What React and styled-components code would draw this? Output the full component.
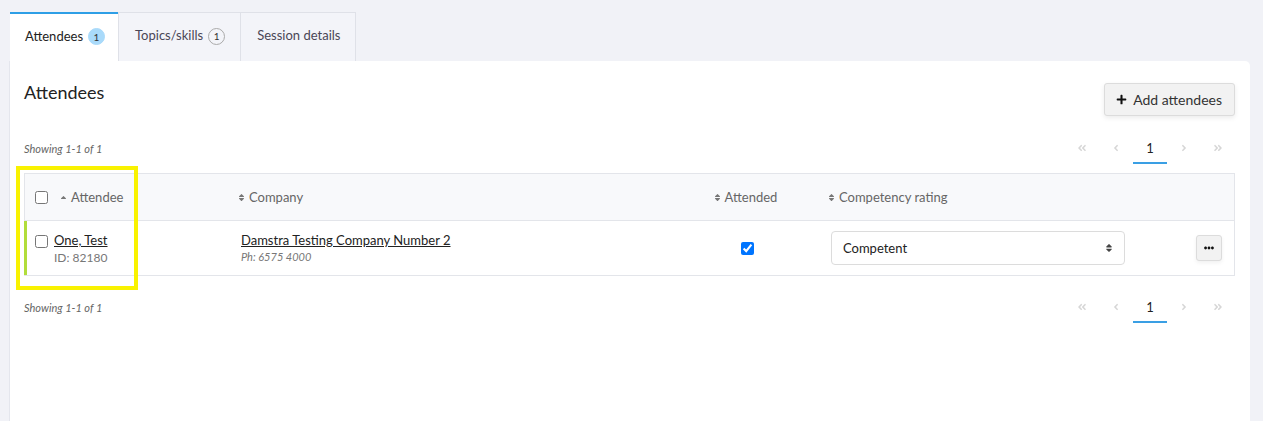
import styled, { createGlobalStyle, css } from "styled-components"
import {
    FaAngleDoubleLeft, FaAngleDoubleRight, FaAngleLeft, FaAngleRight,
    FaPlus, FaEllipsisH, FaSort, FaSortUp
} from "react-icons/fa"

const GlobalStyle = createGlobalStyle`
    body{
        margin: 0;
        background: #f1f2f7;
        font-family: Lato, "Open Sans", sans-serif;
        color: #333;
    }
`

const tabs = [
    { label: "Attendees", count: 1 },
    { label: "Topics/skills", count: 1 },
    { label: "Session details" },
]

const Pagination = () => (
    <PagerStyled>
        <PageItem><FaAngleDoubleLeft /></PageItem>
        <PageItem><FaAngleLeft /></PageItem>
        <PageItem $current>1</PageItem>
        <PageItem><FaAngleRight /></PageItem>
        <PageItem><FaAngleDoubleRight /></PageItem>
    </PagerStyled>
)

const Toolbar = ({ top }) => (
    <ToolbarStyled $top={top}>
        <Showing>Showing 1-1 of 1</Showing>
        <Pagination />
    </ToolbarStyled>
)

const SortLabel = ({ up, children }) => (
    <SortStyled>
        {up ? <FaSortUp className="up" /> : <FaSort />}
        {children}
    </SortStyled>
)

export default function App() {
    return (
        <Page>
            <GlobalStyle />
            <Tabs>
                {tabs.map((tab, i) => (
                    <Tab key={tab.label} $active={i === 0}>
                        {tab.label}
                        {tab.count && <Badge $active={i === 0}>{tab.count}</Badge>}
                    </Tab>
                ))}
            </Tabs>
            <Card>
                <TitleBar>
                    <Title>Attendees</Title>
                    <AddButton><FaPlus /> Add attendees</AddButton>
                </TitleBar>
                <Toolbar top={17} />
                <Table>
                    <HeadRow>
                        <Cell $first $gap={11} $pad={10}>
                            <Check type="checkbox" />
                            <SortLabel up>Attendee</SortLabel>
                        </Cell>
                        <Cell><SortLabel>Company</SortLabel></Cell>
                        <Cell $center><SortLabel>Attended</SortLabel></Cell>
                        <Cell $pad={27}><SortLabel>Competency rating</SortLabel></Cell>
                        <Cell />
                    </HeadRow>
                    <BodyRow>
                        <Cell $first $top $gap={6} $pad={8}>
                            <Check type="checkbox" className="row-check" />
                            <Stack>
                                <LinkText>One, Test</LinkText>
                                <SubText>ID: 82180</SubText>
                            </Stack>
                        </Cell>
                        <Cell $pad={10} $top>
                            <Stack>
                                <LinkText>Damstra Testing Company Number 2</LinkText>
                                <SubText $italic>Ph: 6575 4000</SubText>
                            </Stack>
                        </Cell>
                        <Cell $center>
                            <Check type="checkbox" defaultChecked />
                        </Cell>
                        <Cell $pad={29}>
                            <SelectBox>
                                Competent
                                <FaSort />
                            </SelectBox>
                        </Cell>
                        <Cell $right>
                            <MoreButton><FaEllipsisH /></MoreButton>
                        </Cell>
                    </BodyRow>
                </Table>
                <Toolbar top={16} />
            </Card>
            <Highlight />
        </Page>
    )
}

const Page = styled.div`
    position: relative;
    padding: 12px 13px 0 10px;
    height: 409px;
    overflow: hidden;
`

const Tabs = styled.div`
    display: flex;
`

const Tab = styled.div`
    height: 49px;
    box-sizing: border-box;
    display: flex;
    align-items: center;
    gap: 5px;
    padding: 0 15px 4px 16px;
    font-size: 13px;
    color: #4a4656;
    background: #f3f4f9;
    border: 1px solid #dfe1e8;
    border-bottom: none;
    & + &{
        margin-left: -1px;
    }
    ${({ $active }) => $active && css`
        background: #ffffff;
        color: #222;
        border: none;
        border-top: 2px solid #2e9fe6;
        padding: 0 13px 4px 15px;
        margin-right: 1px;
    `}
`

const Badge = styled.span`
    width: 15px;
    height: 15px;
    border-radius: 50%;
    display: inline-flex;
    align-items: center;
    justify-content: center;
    font-size: 10px;
    margin-top: 2px;
    color: #333;
    border: 1px solid #aaa;
    background: transparent;
    ${({ $active }) => $active && css`
        border-color: #a9dafa;
        background: #a9dafa;
    `}
`

const Card = styled.div`
    background: #ffffff;
    border-radius: 0 5px 0 0;
    padding: 20px 15px 0 14px;
    height: 380px;
    box-shadow: -1px 0 0 #e4e6ed;
`

const TitleBar = styled.div`
    display: flex;
    justify-content: space-between;
    align-items: flex-start;
`

const Title = styled.h2`
    margin: 0;
    font-size: 18px;
    line-height: 22px;
    font-weight: 400;
    color: #222;
`

const AddButton = styled.button`
    margin-top: 2px;
    height: 33px;
    display: flex;
    align-items: center;
    gap: 6px;
    padding: 0 12px 0 11px;
    font-family: Lato, sans-serif;
    font-size: 14px;
    color: #333;
    background: #f2f2f2;
    border: 1px solid #dcdcdc;
    border-radius: 3px;
    box-shadow: 0 2px 5px rgba(0,0,0,0.08);
    svg{
        font-size: 11px;
        color: #111;
    }
`

const ToolbarStyled = styled.div`
    margin-top: ${({ $top }) => $top}px;
    margin-bottom: 9px;
    display: flex;
    justify-content: space-between;
    align-items: center;
`

const Showing = styled.span`
    font-size: 11px;
    font-style: italic;
    color: #666;
`

const PagerStyled = styled.div`
    display: flex;
`

const PageItem = styled.span`
    width: 34px;
    height: 29px;
    display: flex;
    align-items: center;
    justify-content: center;
    color: #d6d6d6;
    font-size: 10px;
    border-bottom: 2px solid transparent;
    ${({ $current }) => $current && css`
        color: #222;
        font-size: 13px;
        border-bottom-color: #3a9fe4;
    `}
`

const Table = styled.div`
    border: 1px solid #e3e5ea;
`

const rowGrid = css`
    display: grid;
    grid-template-columns: 204px 461px 110px 360px 1fr;
`

const HeadRow = styled.div`
    ${rowGrid}
    height: 46px;
    background: #f8f9fb;
    border-bottom: 1px solid #e3e5ea;
    font-size: 13px;
    color: #666;
`

const BodyRow = styled.div`
    ${rowGrid}
    height: 54px;
    border-left: 3px solid #b1dd3b;
    margin-left: -1px;
    font-size: 13px;
    .row-check{
        margin-top: 3px;
    }
`

const Cell = styled.div`
    display: flex;
    align-items: center;
    padding-left: ${({ $pad }) => $pad ?? 8}px;
    ${({ $first, $gap }) => $first && css`
        gap: ${$gap}px;
    `}
    ${({ $top }) => $top && css`
        align-items: flex-start;
        padding-top: 11px;
    `}
    ${({ $center }) => $center && css`
        justify-content: center;
        padding-left: 0;
    `}
    ${({ $right }) => $right && css`
        justify-content: flex-end;
        padding-right: 12px;
    `}
`

const Check = styled.input`
    margin: 0;
    width: 13px;
    height: 13px;
    accent-color: #0075ff;
`

const SortStyled = styled.span`
    display: inline-flex;
    align-items: center;
    gap: 3px;
    svg{
        font-size: 9px;
        color: #777;
    }
    .up{
        margin-top: 4px;
    }
`

const Stack = styled.div`
    display: flex;
    flex-direction: column;
    gap: 2px;
`

const LinkText = styled.span`
    color: #222;
    font-size: 13px;
    text-decoration: underline;
`

const SubText = styled.span`
    color: #777;
    font-size: ${({ $italic }) => $italic ? 11 : 12}px;
    font-style: ${({ $italic }) => $italic ? "italic" : "normal"};
`

const SelectBox = styled.div`
    width: 294px;
    height: 34px;
    box-sizing: border-box;
    display: flex;
    align-items: center;
    justify-content: space-between;
    padding: 0 10px 0 11px;
    border: 1px solid #dcdcdc;
    border-radius: 4px;
    color: #222;
    font-size: 13px;
    svg{
        font-size: 10px;
        color: #444;
    }
`

const MoreButton = styled.button`
    width: 26px;
    height: 26px;
    display: flex;
    align-items: center;
    justify-content: center;
    padding: 0;
    background: #f2f2f2;
    border: 1px solid #dcdcdc;
    border-radius: 3px;
    box-shadow: 0 2px 4px rgba(0,0,0,0.06);
    svg{
        font-size: 10px;
        color: #111;
    }
`

const Highlight = styled.div`
    position: absolute;
    left: 16px;
    top: 166px;
    width: 114px;
    height: 116px;
    border: 4px solid #f9f200;
    pointer-events: none;
`
